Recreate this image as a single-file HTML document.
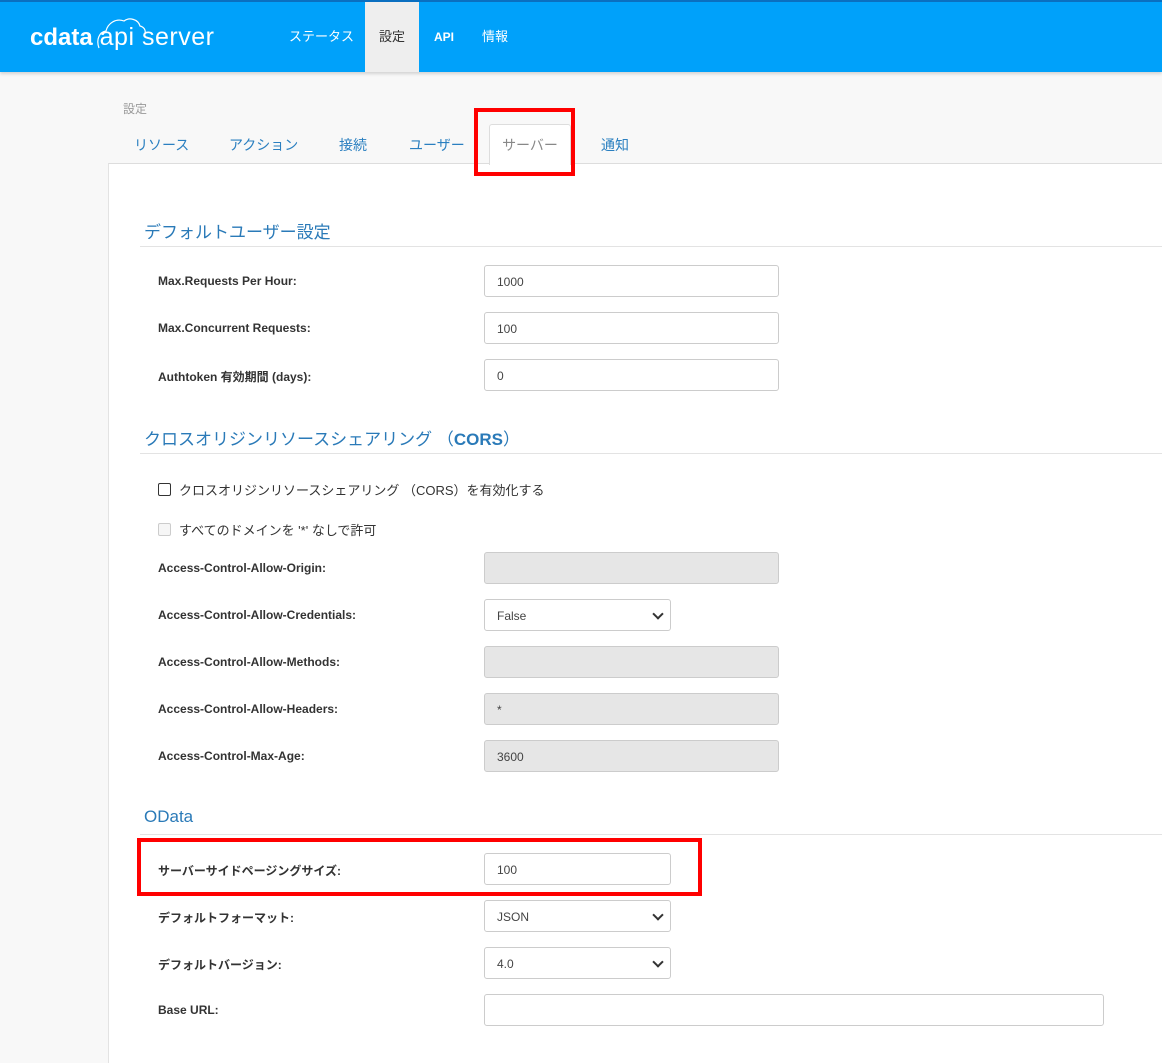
<!DOCTYPE html>
<html><head><meta charset="utf-8"><style>
*{box-sizing:border-box;margin:0;padding:0}
body{width:1162px;height:1059px;overflow:hidden;background:#f8f8f8;font-family:"Liberation Sans","Noto Sans CJK JP",sans-serif;position:relative}
.hdr{position:absolute;left:0;top:0;width:1162px;height:72px;background:#00a1fa;border-top:2px solid #0a6fc0;box-shadow:0 2px 3px rgba(0,0,0,.15)}
.logo{position:absolute;left:30px;top:21px;color:#fff;font-size:25px;white-space:nowrap}
.logo b{font-weight:bold;letter-spacing:0px;font-size:24px}
.nav{position:absolute;top:0;height:70px;line-height:70px;font-size:13px;color:#fff}
.t{position:absolute;top:135px;font-size:14px;color:#2a7fc0}
.panel{position:absolute;left:108px;top:163px;width:1060px;height:900px;background:#fff;border-left:1px solid #e3e3e3;border-top:1px solid #ddd}
.tab{position:absolute;left:489px;top:124px;width:82px;height:41px;background:#fff;border:1px solid #ddd;border-bottom:none;border-radius:3px 3px 0 0;color:#888;font-size:14px;text-align:center;line-height:40px}
.red{position:absolute;border:4px solid #f00}
.h{position:absolute;left:144px;font-size:17px;color:#2a7ab8}
.hl{position:absolute;left:140px;width:1022px;height:1px;background:#e3e3e3}
.l{position:absolute;left:158px;font-size:12px;font-weight:bold;color:#333}
.i{position:absolute;left:484px;width:295px;height:32px;border:1px solid #ccc;border-radius:3px;background:#fff;font-size:12px;color:#444;padding:9px 12px}
.dis{background:#e6e6e6}
.s{width:187px}
.s::after{content:"";position:absolute;right:8px;top:10px;width:6px;height:6px;border-right:2px solid #333;border-bottom:2px solid #333;transform:rotate(45deg)}
.cb{position:absolute;left:158px;width:13px;height:13px;border:1px solid #333;border-radius:2px}
.ct{position:absolute;left:179px;font-size:13px;color:#333}
</style></head><body>
<div class="hdr">
<div class="logo"><b>cdata</b>&nbsp;<span style="font-weight:300;letter-spacing:0.5px">api server</span></div>
<svg style="position:absolute;left:96px;top:12px" width="50" height="36" viewBox="0 0 50 36"><path d="M3 34 C0 26 3 18 10 17 C12 9 20 4 28 7 C33 3 42 5 44 12 C48 13 50 16 49 20" fill="none" stroke="#fff" stroke-width="1.2"/></svg>
<div class="nav" style="left:289px">ステータス</div>
<div class="nav" style="left:365px;width:54px;background:#eee;color:#333;text-align:center">設定</div>
<div class="nav" style="left:434px;font-weight:bold;font-size:12px">API</div>
<div class="nav" style="left:482px">情報</div>
</div>
<div style="position:absolute;left:123px;top:100px;font-size:12px;color:#999">設定</div>
<div class="panel"></div>
<div class="t" style="left:134px">リソース</div>
<div class="t" style="left:229px">アクション</div>
<div class="t" style="left:339px">接続</div>
<div class="t" style="left:409px">ユーザー</div>
<div class="tab">サーバー</div>
<div class="t" style="left:601px">通知</div>
<div class="red" style="left:474px;top:108px;width:101px;height:68px"></div>

<div class="h" style="top:218px">デフォルトユーザー設定</div><div class="hl" style="top:246px"></div>
<div class="l" style="top:274px">Max.Requests Per Hour:</div><div class="i" style="top:265px">1000</div>
<div class="l" style="top:321px">Max.Concurrent Requests:</div><div class="i" style="top:312px">100</div>
<div class="l" style="top:368px">Authtoken 有効期間 (days):</div><div class="i" style="top:359px">0</div>

<div class="h" style="top:425px">クロスオリジンリソースシェアリング （<b>CORS</b>）</div><div class="hl" style="top:453px"></div>
<div class="cb" style="top:483px"></div><div class="ct" style="top:480px">クロスオリジンリソースシェアリング （CORS）を有効化する</div>
<div class="cb" style="top:523px;border-color:#ccc;background:#f6f6f6"></div><div class="ct" style="top:520px">すべてのドメインを '*' なしで許可</div>
<div class="l" style="top:561px">Access-Control-Allow-Origin:</div><div class="i dis" style="top:552px"></div>
<div class="l" style="top:608px">Access-Control-Allow-Credentials:</div><div class="i s" style="top:599px">False</div>
<div class="l" style="top:655px">Access-Control-Allow-Methods:</div><div class="i dis" style="top:646px"></div>
<div class="l" style="top:702px">Access-Control-Allow-Headers:</div><div class="i dis" style="top:693px">*</div>
<div class="l" style="top:749px">Access-Control-Max-Age:</div><div class="i dis" style="top:740px">3600</div>

<div class="h" style="top:807px">OData</div><div class="hl" style="top:834px"></div>
<div class="l" style="top:862px">サーバーサイドページングサイズ:</div><div class="i" style="top:853px;width:187px">100</div>
<div class="red" style="left:137px;top:838px;width:565px;height:58px"></div>
<div class="l" style="top:909px">デフォルトフォーマット:</div><div class="i s" style="top:900px">JSON</div>
<div class="l" style="top:956px">デフォルトバージョン:</div><div class="i s" style="top:947px">4.0</div>
<div class="l" style="top:1003px">Base URL:</div><div class="i" style="top:994px;width:620px"></div>
</body></html>
